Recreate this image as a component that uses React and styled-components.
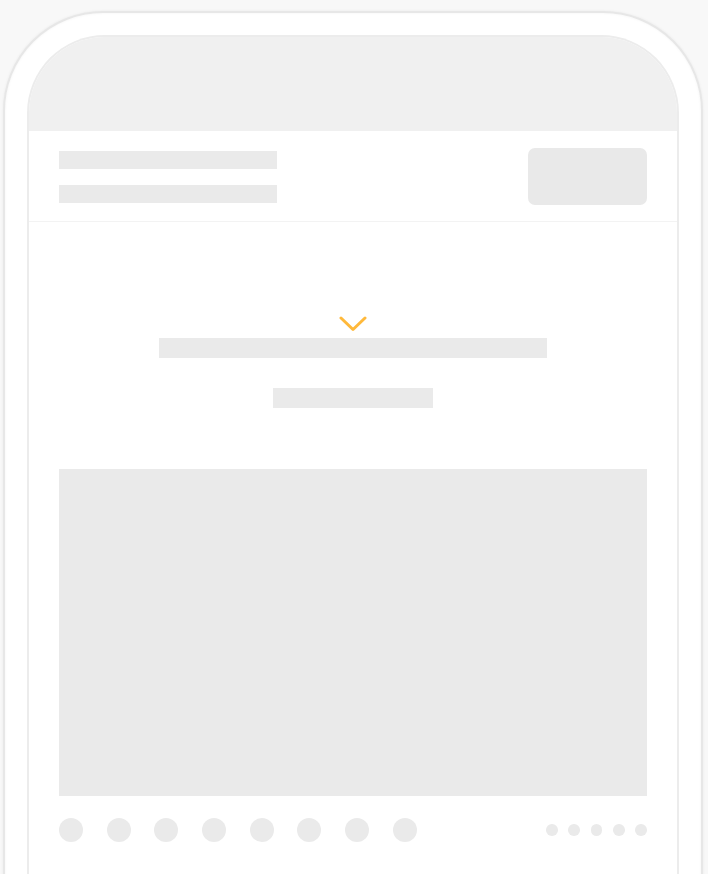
import React from "react"
import styled, { createGlobalStyle } from "styled-components"

const GlobalStyle = createGlobalStyle`
  html, body {
    margin: 0;
    padding: 0;
    background: #f8f8f8;
    font-family: "Liberation Sans", Arial, sans-serif;
    overflow: hidden;
  }
`

const Page = styled.div`
  padding: 11px 0 0 3px;
  height: 874px;
  box-sizing: border-box;
`

const Phone = styled.div`
  width: 700px;
  height: 1000px;
  box-sizing: border-box;
  background: #ffffff;
  border: 2px solid #e7e7e7;
  border-radius: 100px 100px 0 0;
  box-shadow: 0 0 3px rgba(0, 0, 0, 0.06), inset 0 0 3px rgba(0, 0, 0, 0.05);
  padding: 22px 22px 0 22px;
`

const Screen = styled.div`
  height: 100%;
  box-sizing: border-box;
  border: 2px solid #ececec;
  border-bottom: none;
  border-radius: 78px 78px 0 0;
  overflow: hidden;
  background: #ffffff;
  display: flex;
  flex-direction: column;
`

const StatusArea = styled.div`
  height: 94px;
  background: #f0f0f0;
  flex-shrink: 0;
`

const Header = styled.div`
  height: 90px;
  flex-shrink: 0;
  display: flex;
  align-items: center;
  justify-content: space-between;
  padding: 0 30px;
  border-bottom: 1px solid #f3f3f3;
`

const TitleGroup = styled.div`
  display: flex;
  flex-direction: column;
  gap: 16px;
  padding-top: 2px;
`

const Line = styled.div`
  width: ${(p) => p.$w}px;
  height: ${(p) => p.$h || 18}px;
  background: #eaeaea;
`

const ActionButton = styled.div`
  width: 119px;
  height: 57px;
  border-radius: 7px;
  background: #e9e9e9;
`

const Content = styled.div`
  display: flex;
  flex-direction: column;
  align-items: center;
  padding: 94px 30px 0;
`

const Chevron = styled.svg`
  display: block;
  width: 28px;
  height: 16px;
`

const Headline = styled(Line)`
  margin-top: 6px;
`

const Subline = styled(Line)`
  margin-top: 30px;
`

const Media = styled.div`
  align-self: stretch;
  height: 327px;
  margin-top: 61px;
  background: #eaeaea;
`

const Footer = styled.div`
  align-self: stretch;
  display: flex;
  align-items: center;
  justify-content: space-between;
  margin-top: 22px;
`

const Thumbs = styled.div`
  display: flex;
  gap: 23.7px;
`

const Thumb = styled.div`
  width: 24px;
  height: 24px;
  border-radius: 50%;
  background: #eaeaea;
`

const Pager = styled.div`
  display: flex;
  gap: 10.7px;
`

const PagerDot = styled.div`
  width: 11.7px;
  height: 11.7px;
  border-radius: 50%;
  background: #eaeaea;
`

export default function App() {
  return (
    <>
      <GlobalStyle />
      <Page>
        <Phone>
          <Screen>
            <StatusArea />
            <Header>
              <TitleGroup>
                <Line $w={218} />
                <Line $w={218} />
              </TitleGroup>
              <ActionButton />
            </Header>
            <Content>
              <Chevron viewBox='0 0 28 16'>
                <path
                  d='M2 2 L14 13.5 L26 2'
                  fill='none'
                  stroke='#ffb93b'
                  strokeWidth='3'
                  strokeLinecap='round'
                  strokeLinejoin='round'
                />
              </Chevron>
              <Headline $w={388} $h={20} />
              <Subline $w={160} $h={20} />
              <Media />
              <Footer>
                <Thumbs>
                  {Array.from({ length: 8 }).map((_, i) => (
                    <Thumb key={i} />
                  ))}
                </Thumbs>
                <Pager>
                  {Array.from({ length: 5 }).map((_, i) => (
                    <PagerDot key={i} />
                  ))}
                </Pager>
              </Footer>
            </Content>
          </Screen>
        </Phone>
      </Page>
    </>
  )
}
